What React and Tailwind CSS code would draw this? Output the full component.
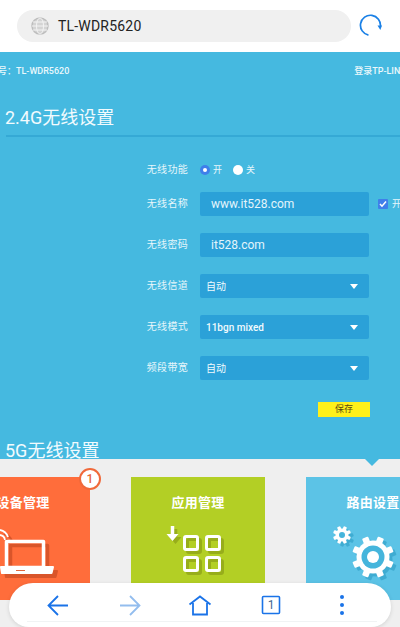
const FONT = "font-['Roboto','Noto_Sans_CJK_SC',sans-serif]";

const ROWS = [
  { label: "无线名称", value: "www.it528.com", kind: "input", extra: true },
  { label: "无线密码", value: "it528.com", kind: "input" },
  { label: "无线信道", value: "自动", kind: "select" },
  { label: "无线模式", value: "11bgn mixed", kind: "select", bold: true },
  { label: "频段带宽", value: "自动", kind: "select" },
];

function Label({ children }) {
  return (
    <span className="w-[189px] shrink-0 pr-[1px] text-right text-[10px] leading-none tracking-[0.3px] text-[#e6f6fb]">
      {children}
    </span>
  );
}

function Radio({ checked, text }) {
  return (
    <div className="flex items-center gap-[3px]">
      {checked ? (
        <span className="flex h-[10px] w-[10px] items-center justify-center rounded-full bg-[#3f7fea]">
          <span className="h-[4px] w-[4px] rounded-full bg-white" />
        </span>
      ) : (
        <span className="h-[10px] w-[10px] rounded-full bg-white" />
      )}
      <span className="text-[9px] leading-none text-[#e6f6fb]">{text}</span>
    </div>
  );
}

function FormRow({ row }) {
  return (
    <div className="flex h-[24px] items-center gap-[11px]">
      <Label>{row.label}</Label>
      {row.kind === "input" ? (
        <div className="flex h-full w-[169px] shrink-0 items-center rounded-[2px] bg-[#2ba1d8] pl-[11px] text-[12px] font-normal text-[#e3f5fb]">
          {row.value}
        </div>
      ) : (
        <div className="flex h-full w-[169px] shrink-0 items-center justify-between rounded-[2px] bg-[#2ba1d8] pl-[6px] pr-[11px] text-[10px] text-[#f0fafd]">
          <span className={row.bold ? "font-medium" : ""}>{row.value}</span>
          <svg width="8" height="5" viewBox="0 0 8 5">
            <path d="M0 0h8L4 5z" fill="#fff" />
          </svg>
        </div>
      )}
      {row.extra && (
        <div className="ml-[-2px] flex shrink-0 items-center gap-[4px]">
          <span className="flex h-[10px] w-[10px] items-center justify-center rounded-[1px] bg-[#3f7fea]">
            <svg width="8" height="8" viewBox="0 0 8 8">
              <path d="M1 4l2 2.2L7 1.5" fill="none" stroke="#fff" strokeWidth="1.5" />
            </svg>
          </span>
          <span className="text-[9px] leading-none text-[#e6f6fb]">开</span>
        </div>
      )}
    </div>
  );
}

function LaptopIcon() {
  const shape = (
    <>
      <path d="M50.500 16.500h37v26h-37z" fill="none" stroke="currentColor" strokeWidth="3.500" strokeLinejoin="round" />
      <path d="M45 42h52l-1.500 6H46z" fill="currentColor" stroke="currentColor" strokeWidth="2" strokeLinejoin="round" />
      <path d="M44 10a6 6 0 0 1 5 5M44 5a11 11 0 0 1 8 7" fill="none" stroke="currentColor" strokeWidth="1.800" />
    </>
  );
  return (
    <svg viewBox="0 0 134 75" className="h-[75px] w-[134px]">
      <g transform="translate(4 4)" className="text-[#d9552a]">{shape}</g>
      <g className="text-white">{shape}</g>
      <path d="M60 45.500h9" stroke="#e0673f" strokeWidth="1" />
    </svg>
  );
}

function AppsIcon() {
  const shape = (
    <>
      <path d="M41.500 1v10" fill="none" stroke="currentColor" strokeWidth="3.500" />
      <path d="M35.500 9h12l-6 7z" fill="currentColor" />
      <rect x="53.500" y="11.500" width="13" height="13" rx="1.500" fill="none" stroke="currentColor" strokeWidth="3" />
      <rect x="75.500" y="11.500" width="13" height="13" rx="1.500" fill="none" stroke="currentColor" strokeWidth="3" />
      <rect x="53.500" y="32.500" width="13" height="13" rx="1.500" fill="none" stroke="currentColor" strokeWidth="3" />
      <rect x="75.500" y="32.500" width="13" height="13" rx="1.500" fill="none" stroke="currentColor" strokeWidth="3" />
    </>
  );
  return (
    <svg viewBox="0 0 134 75" className="h-[75px] w-[134px]">
      <g transform="translate(3 3)" className="text-[#97ad1b]">{shape}</g>
      <g className="text-white">{shape}</g>
    </svg>
  );
}

function Gear({ cx, cy, body, tooth, toothW, ring, hole, fill }) {
  const angles = [0, 45, 90, 135, 180, 225, 270, 315];
  return (
    <g transform={`translate(${cx} ${cy})`}>
      <circle r={body} fill={fill} />
      {angles.map((a) => (
        <rect
          key={a}
          x={-toothW / 2}
          y={-tooth}
          width={toothW}
          height={tooth - body + 2}
          rx="1"
          fill={fill}
          transform={`rotate(${a + 22.5})`}
        />
      ))}
      <circle r={ring} fill="#45b5dc" />
      <circle r={hole} fill={fill} />
    </g>
  );
}

function GearIcon() {
  return (
    <svg viewBox="0 0 134 75" className="h-[75px] w-[134px]">
      <Gear cx={39} cy={13} body={6.500} tooth={9} toothW={3.500} ring={3} hole={0} fill="#3facd2" />
      <Gear cx={70} cy={35} body={16.500} tooth={21} toothW={6.500} ring={11.500} hole={6} fill="#3facd2" />
      <Gear cx={36} cy={10} body={6.500} tooth={9} toothW={3.500} ring={3} hole={0} fill="#fff" />
      <Gear cx={67} cy={32} body={16.500} tooth={21} toothW={6.500} ring={11.500} hole={6} fill="#fff" />
    </svg>
  );
}

function Card({ title, color, children }) {
  return (
    <div className={`relative flex h-[123px] w-[134px] shrink-0 flex-col ${color}`}>
      <div className="flex h-[48px] shrink-0 items-start justify-center pt-[17px] text-[13px] font-bold leading-[17px] tracking-[0.2px] text-white">
        {title}
      </div>
      {children}
    </div>
  );
}

function BottomNav() {
  return (
    <div className="absolute bottom-0 left-[9px] flex h-[44px] w-[382px] items-start rounded-t-[24px] rounded-b-[20px] bg-white pt-[12px] shadow-[0_1px_4px_rgba(0,0,0,0.12)]">
      <div className="absolute bottom-[5px] left-[18px] right-[14px] h-px bg-[#f1f3f4]" />
      <svg width="382" height="22" viewBox="0 0 382 22" className="block">
        <path d="M59 10.500H40M49 1l-9.500 9.500L49 20" fill="none" stroke="#1a73e8" strokeWidth="1.800" />
        <path d="M111 10.500h19M121 1l9.500 9.500L121 20" fill="none" stroke="#93bdee" strokeWidth="1.800" />
        <path d="M180.500 9.500L191 1.500l10.500 8M184 8v11.500h14V8" fill="none" stroke="#1a73e8" strokeWidth="1.800" />
        <rect x="253.500" y="1.500" width="17" height="17" rx="1" fill="none" stroke="#1a73e8" strokeWidth="1.600" />
        <circle cx="333" cy="2" r="2" fill="#1a73e8" />
        <circle cx="333" cy="10" r="2" fill="#1a73e8" />
        <circle cx="333" cy="18" r="2" fill="#1a73e8" />
      </svg>
      <span className="absolute left-[253px] top-[13px] flex h-[18px] w-[18px] items-center justify-center text-[12px] leading-none text-[#44688f]">
        1
      </span>
    </div>
  );
}

export default function App() {
  return (
    <div className={`relative flex h-[627px] w-[400px] flex-col overflow-hidden bg-white ${FONT}`}>
      <header className="flex h-[52px] shrink-0 items-center pl-[17px]">
        <div className="flex h-[32px] w-[334px] items-center rounded-full bg-[#f0f0f0] pl-[14px]">
          <svg width="18" height="18" viewBox="0 0 18 18">
            <circle cx="9" cy="9" r="8" fill="#d4d4d4" stroke="#bdbdbd" strokeWidth="1.400" />
            <ellipse cx="9" cy="9" rx="3.500" ry="8" fill="none" stroke="#f3f3f3" strokeWidth="1" />
            <path d="M1 9h16M2 5h14M2 13h14" fill="none" stroke="#f3f3f3" strokeWidth="1" />
          </svg>
          <span className="ml-[9px] text-[14px] tracking-[0.2px] text-[#222]">TL-WDR5620</span>
        </div>
        <svg width="24" height="24" viewBox="0 0 24 24" className="ml-[8px]">
          <path d="M20.500 8A10 10 0 1 0 14 21.200" fill="none" stroke="#1a80e6" strokeWidth="1.700" transform="rotate(28 12 12)" />
          <path d="M18.500 11.500h4.500l-1.700 4.500z" fill="#1a80e6" />
        </svg>
      </header>

      <section className="flex h-[407px] shrink-0 flex-col overflow-hidden bg-[#45b9e0] text-white">
        <div className="flex h-[40px] shrink-0 items-center justify-between text-[9px] font-medium text-[#eaf8fc]">
          <span className="ml-[-11px] whitespace-nowrap">型号：TL-WDR5620</span>
          <span className="mr-[-6px] whitespace-nowrap pl-[8px]">登录TP-LINK</span>
        </div>
        <h2 className="mt-[14px] ml-[5px] h-[24px] text-[18px] font-normal leading-[24px] text-[#f2fbfe]">2.4G无线设置</h2>
        <div className="ml-[6px] mt-[5px] h-[2px] shrink-0 bg-[#35a9d5]" />
        <div className="mt-[25px] flex h-[16px] shrink-0 items-center gap-[11px]">
          <Label>无线功能</Label>
          <div className="flex items-center gap-[11px]">
            <Radio checked text="开" />
            <Radio text="关" />
          </div>
        </div>
        <div className="mt-[14px] flex w-[420px] shrink-0 flex-col gap-[17px]">
          {ROWS.map((row) => (
            <FormRow key={row.label} row={row} />
          ))}
        </div>
        <button
          type="button"
          className="ml-[318px] mt-[22px] flex h-[15px] w-[52px] shrink-0 items-center justify-center bg-[#fff01a] text-[9px] leading-none text-[#5a4a10]"
        >
          保存
        </button>
        <h2 className="ml-[5px] mt-[22px] h-[24px] shrink-0 text-[18px] font-normal leading-[24px] text-[#f2fbfe]">5G无线设置</h2>
      </section>

      <section className="relative flex-1 bg-[#efefef]">
        <div className="absolute left-[365px] top-0 h-0 w-0 border-x-[7px] border-t-[7px] border-x-transparent border-t-[#45b9e0]" />
        <div className="ml-[-44px] mt-[18px] flex gap-[41px]">
          <Card title="设备管理" color="bg-[#ff6d3b]">
            <LaptopIcon />
            <span className="absolute right-[-11px] top-[-9px] flex h-[22px] w-[22px] items-center justify-center rounded-full border-[2px] border-[#f0693a] bg-white text-[12px] font-medium leading-none text-[#e8673a]">
              1
            </span>
          </Card>
          <Card title="应用管理" color="bg-[#b3cf25]">
            <AppsIcon />
          </Card>
          <Card title="路由设置" color="bg-[#5cc3e6]">
            <GearIcon />
          </Card>
        </div>
      </section>

      <BottomNav />
    </div>
  );
}
